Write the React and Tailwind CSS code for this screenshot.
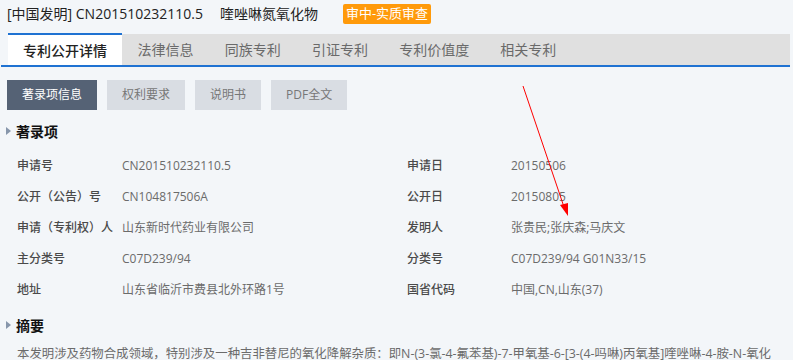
const tabs = ['专利公开详情', '法律信息', '同族专利', '引证专利', '专利价值度', '相关专利'];
const subTabs = ['著录项信息', '权利要求', '说明书', 'PDF全文'];

const rows = [
  ['申请号', 'CN201510232110.5', '申请日', '20150506'],
  ['公开（公告）号', 'CN104817506A', '公开日', '20150805'],
  ['申请（专利权）人', '山东新时代药业有限公司', '发明人', '张贵民;张庆森;马庆文'],
  ['主分类号', 'C07D239/94', '分类号', 'C07D239/94 G01N33/15'],
  ['地址', '山东省临沂市费县北外环路1号', '国省代码', '中国,CN,山东(37)'],
];

function SectionTitle({ children }) {
  return (
    <div className="flex items-center h-[20px] pl-[6px]">
      <svg width="5" height="8" viewBox="0 0 5 8" className="mr-[5px]">
        <polygon points="0,0 5,4 0,8" fill="#8796ab" />
      </svg>
      <span className="text-[14px] font-bold text-[#111]">{children}</span>
    </div>
  );
}

export default function App() {
  return (
    <div
      className="relative w-[793px] h-[360px] overflow-hidden bg-[#f3f6f9]"
      style={{ fontFamily: '"Open Sans", "Noto Sans CJK SC", sans-serif' }}
    >
      {/* Title */}
      <div className="flex items-center h-[27px] pl-[7px] text-[14px] text-[#222]">
        <span>[中国发明] CN201510232110.5</span>
        <span className="ml-[17px]">喹唑啉氮氧化物</span>
        <span className="ml-[25px] h-[20px] px-[3px] flex items-center rounded-[2px] bg-[#ff9a0a] text-white text-[13px]">
          审中-实质审查
        </span>
      </div>

      {/* Tabs */}
      <div className="mt-[7px] ml-[1px] mr-[3px] pl-[7px] border-b-2 border-[#1f72d2]">
        <div className="flex h-[31px] bg-[#e0e0e0]">
          {tabs.map((t, i) =>
            i === 0 ? (
              <div
                key={t}
                className="-mt-[1px] h-[32px] px-[15px] flex items-center bg-white border-t-2 border-[#1f72d2] text-[14px] text-[#222] font-medium"
              >
                {t}
              </div>
            ) : (
              <div key={t} className="px-[15.6px] flex items-center text-[14px] text-[#6a6a6a]">
                {t}
              </div>
            )
          )}
        </div>
      </div>

      {/* Sub buttons */}
      <div className="flex gap-[10px] pl-[7px] mt-[13px]">
        {subTabs.map((t, i) => (
          <div
            key={t}
            className={`h-[30px] px-[15px] flex items-center text-[12px] ${
              i === 0 ? 'bg-[#556275] text-white' : 'bg-[#d9dde3] text-[#777]'
            }`}
          >
            {t}
          </div>
        ))}
      </div>

      <div className="mt-[11px]">
        <SectionTitle>著录项</SectionTitle>
      </div>

      {/* Bibliographic rows */}
      <div className="mt-[9px] pl-[17px] grid grid-cols-[105px_285px_104px_1fr] text-[12px]">
        {rows.map((r) => (
          <div key={r[0]} className="contents">
            <div className="h-[31px] flex items-center text-[#4a4a4a] font-medium">{r[0]}</div>
            <div className="h-[31px] flex items-center text-[#6b6b6b]">{r[1]}</div>
            <div className="h-[31px] flex items-center text-[#4a4a4a] font-medium">{r[2]}</div>
            <div className="h-[31px] flex items-center text-[#6b6b6b]">{r[3]}</div>
          </div>
        ))}
      </div>

      <div className="mt-[10px]">
        <SectionTitle>摘要</SectionTitle>
      </div>

      <p className="mt-[8px] pl-[17px] pr-[16px] text-[12.4px] leading-[22px] text-[#6b6b6b]">
        本发明涉及药物合成领域，特别涉及一种吉非替尼的氧化降解杂质：即N-(3-氯-4-氟苯基)-7-甲氧基-6-[3-(4-吗啉)丙氧基]喹唑啉-4-胺-N-氧化物及其制备方法和应用。
      </p>

      {/* Annotation arrow */}
      <svg className="absolute left-0 top-0 pointer-events-none" width="793" height="360">
        <line x1="523" y1="86" x2="564" y2="207" stroke="#ff0000" strokeWidth="1" />
        <polygon points="568,216 560,205 568,203" fill="#ff0000" />
      </svg>
    </div>
  );
}
